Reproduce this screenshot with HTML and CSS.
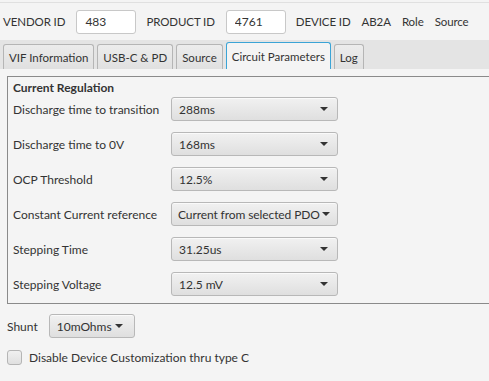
FILE: index.html
```html
<!DOCTYPE html>
<html>
<head>
<meta charset="utf-8">
<link rel="stylesheet" href="styles.css">
</head>
<body>
<div class="topbar">
  <span class="lbl">VENDOR ID</span>
  <input class="field" value="483">
  <span class="lbl">PRODUCT ID</span>
  <input class="field" value="4761">
  <span class="lbl">DEVICE ID</span>
  <span class="lbl val">AB2A</span>
  <span class="lbl">Role</span>
  <span class="lbl val">Source</span>
</div>
<div class="tabs">
  <div class="tab">VIF Information</div>
  <div class="tab">USB-C &amp; PD</div>
  <div class="tab">Source</div>
  <div class="tab selected">Circuit Parameters</div>
  <div class="tab">Log</div>
</div>
<div class="content">
  <div class="panel">
    <div class="title">Current Regulation</div>
    <div class="grid">
      <span class="lbl">Discharge time to transition</span>
      <div class="combo"><span>288ms</span><i class="arrow"></i></div>
      <span class="lbl">Discharge time to 0V</span>
      <div class="combo"><span>168ms</span><i class="arrow"></i></div>
      <span class="lbl">OCP Threshold</span>
      <div class="combo"><span>12.5%</span><i class="arrow"></i></div>
      <span class="lbl">Constant Current reference</span>
      <div class="combo tight"><span>Current from selected PDO</span><i class="arrow"></i></div>
      <span class="lbl">Stepping Time</span>
      <div class="combo"><span>31.25us</span><i class="arrow"></i></div>
      <span class="lbl">Stepping Voltage</span>
      <div class="combo"><span>12.5 mV</span><i class="arrow"></i></div>
    </div>
  </div>
  <div class="shunt">
    <span class="lbl">Shunt</span>
    <div class="combo small"><span>10mOhms</span><i class="arrow"></i></div>
  </div>
  <label class="check"><span class="box"></span><span class="lbl">Disable Device Customization thru type C</span></label>
</div>
</body>
</html>
```

FILE: styles.css
```css
* { box-sizing: border-box; }
html, body {
  margin: 0;
  padding: 0;
  background: #f4f4f4;
  font-family: Lato, "Open Sans", sans-serif;
  font-size: 12px;
  color: #333;
  overflow: hidden;
  width: 489px;
  height: 381px;
}
.topbar {
  height: 38px;
  display: flex;
  align-items: center;
  padding: 0 0 0 3px;
  border-top: 1px solid #e0e0e0;
  margin-top: 2px;
  white-space: nowrap;
  font-size: 11.5px;
  letter-spacing: -0.1px;
}
.topbar .lbl { margin-right: 11px; }
.field {
  width: 60px;
  height: 24px;
  border: 1px solid #c8c8c8;
  border-radius: 3px;
  background: #fff;
  font: inherit;
  font-size: 12px;
  letter-spacing: 0;
  color: #333;
  padding: 0 8px;
  margin-right: 10px;
  outline: none;
}
.tabs {
  height: 29px;
  background: #e4e4e4;
  display: flex;
  align-items: flex-end;
  gap: 3px;
  padding-left: 3px;
  white-space: nowrap;
  font-size: 11.5px;
}
.tab {
  height: 25px;
  padding: 0 5px;
  display: flex;
  align-items: center;
  border: 1px solid #b5b5b5;
  border-bottom: none;
  border-radius: 3px 3px 0 0;
  background: linear-gradient(#ececec, #e0e0e0);
}
.tab.selected {
  background: #f4f4f4;
  border-color: #3ba4d6;
  height: 27px;
}
.content { padding: 7px 0 0 7px; }
.panel {
  border: 1px solid #8a8a8a;
  border-right: none;
  height: 228px;
  padding: 3px 0 0 5px;
}
.title { font-weight: bold; line-height: 16px; margin-bottom: 1px; }
.grid {
  display: grid;
  grid-template-columns: 158px 167px;
  grid-auto-rows: 24px;
  row-gap: 11px;
  align-items: center;
  white-space: nowrap;
}
.combo {
  height: 24px;
  border: 1px solid #b8b8b8;
  border-radius: 3px;
  background: linear-gradient(#f1f1f1, #dfdfdf);
  display: flex;
  align-items: center;
  padding: 0 7px;
  justify-content: space-between;
  box-shadow: inset 0 1px 0 #fafafa;
  white-space: nowrap;
}
.combo.tight { padding: 0 5px 0 6px; }
.combo.tight span { letter-spacing: -0.1px; }
.arrow {
  width: 0; height: 0;
  border-left: 4px solid transparent;
  border-right: 4px solid transparent;
  border-top: 4px solid #333;
  margin-right: 2px;
  flex: none;
}
.shunt {
  display: flex;
  align-items: center;
  margin-top: 10px;
  gap: 11px;
}
.combo.small { width: 86px; }
.combo.small .arrow { margin-right: 4px; }
.check {
  display: flex;
  align-items: center;
  margin-top: 12px;
  gap: 7px;
}
.box {
  width: 15px; height: 15px;
  border: 1px solid #b5b5b5;
  border-radius: 3px;
  background: linear-gradient(#f0f0f0, #e0e0e0);
}
```
